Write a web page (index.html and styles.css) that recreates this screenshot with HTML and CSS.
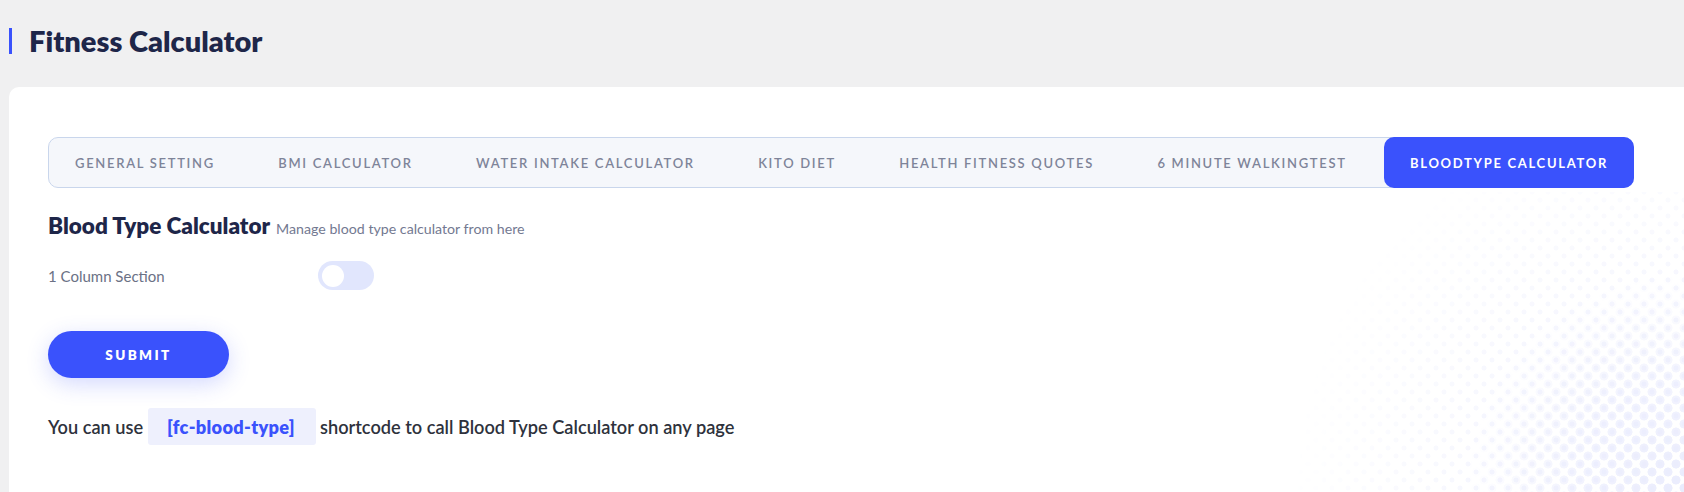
FILE: index.html
```html
<!DOCTYPE html>
<html lang="en">
<head>
<meta charset="utf-8">
<title>Fitness Calculator</title>
<link rel="stylesheet" href="styles.css">
</head>
<body>
<header class="header">
  <h1 class="page-title">Fitness Calculator</h1>
</header>
<main class="card">
  <div class="dots" aria-hidden="true"></div>
  <nav class="tabs">
    <a class="tab">General Setting</a>
    <a class="tab">BMI Calculator</a>
    <a class="tab">Water Intake Calculator</a>
    <a class="tab">Kito Diet</a>
    <a class="tab">Health Fitness Quotes</a>
    <a class="tab">6 Minute WalkingTest</a>
    <a class="tab tab-active">Bloodtype Calculator</a>
  </nav>
  <div class="section-head">
    <h2 class="section-title">Blood Type Calculator</h2>
    <span class="section-sub">Manage blood type calculator from here</span>
  </div>
  <div class="field-row">
    <span class="field-label">1 Column Section</span>
    <span class="toggle"><span class="knob"></span></span>
  </div>
  <button class="submit">SUBMIT</button>
  <p class="note">You can use <code class="shortcode">[fc-blood-type]</code> shortcode to call Blood Type Calculator on any page</p>
</main>
</body>
</html>
```
FILE: styles.css
```css
* { box-sizing: border-box; }
html, body { margin: 0; height: 100%; }
body {
  background: #f0f0f1;
  font-family: "Lato", "Noto Sans", sans-serif;
  color: #2e323c;
  display: flex;
  flex-direction: column;
}
.header {
  height: 87px;
  padding: 28px 0 0 9px;
}
.page-title {
  margin: 0;
  display: inline-block;
  border-left: 3px solid #3a52fc;
  padding-left: 17px;
  font-size: 29px;
  line-height: 26px;
  font-weight: 800;
  color: #1e2649;
}
.card {
  position: relative;
  overflow: hidden;
  flex: 1;
  margin-left: 9px;
  background: #fff;
  border-radius: 10px 0 0 0;
  padding: 50px 50px 0 39px;
}
.dots {
  position: absolute;
  right: 0;
  bottom: 0;
  width: 440px;
  height: 300px;
  pointer-events: none;
}
.dots::before,
.dots::after {
  content: "";
  position: absolute;
  inset: 0;
}
.dots::before {
  background:
    radial-gradient(circle, #eceefd 2.2px, transparent 2.8px) 0 0 / 16px 16px,
    radial-gradient(circle, #eceefd 2.2px, transparent 2.8px) 8px 8px / 16px 16px;
  -webkit-mask-image: radial-gradient(circle 440px at 100% 100%, rgba(0,0,0,0.9) 0%, rgba(0,0,0,0.5) 45%, rgba(0,0,0,0) 90%);
  mask-image: radial-gradient(circle 440px at 100% 100%, rgba(0,0,0,0.9) 0%, rgba(0,0,0,0.5) 45%, rgba(0,0,0,0) 90%);
}
.dots::after {
  background:
    radial-gradient(circle, #eaecfd 4.2px, transparent 4.8px) 0 0 / 16px 16px,
    radial-gradient(circle, #eaecfd 4.2px, transparent 4.8px) 8px 8px / 16px 16px;
  -webkit-mask-image: radial-gradient(circle 220px at 100% 100%, rgba(0,0,0,1) 0%, rgba(0,0,0,0.6) 50%, rgba(0,0,0,0) 100%);
  mask-image: radial-gradient(circle 220px at 100% 100%, rgba(0,0,0,1) 0%, rgba(0,0,0,0.6) 50%, rgba(0,0,0,0) 100%);
}
.tabs {
  position: relative;
  display: flex;
  justify-content: space-between;
  height: 51px;
  border: 1px solid #c9d6ec;
  border-radius: 10px;
  background: #f5f7fb;
}
.tab {
  display: flex;
  align-items: center;
  padding: 0 26px;
  font-size: 13px;
  font-weight: 600;
  letter-spacing: 1.7px;
  text-transform: uppercase;
  color: #7e8499;
  white-space: nowrap;
}
.tab-active {
  margin: -1px -1px -1px 0;
  background: #3a52fc;
  color: #fff;
  font-weight: 700;
  border-radius: 10px;
}
.section-head {
  position: relative;
  margin-top: 24px;
  display: flex;
  align-items: baseline;
  gap: 6px;
}
.section-title {
  margin: 0;
  font-size: 22.5px;
  line-height: 28px;
  font-weight: 800;
  color: #1e2649;
}
.section-sub {
  font-size: 14.2px;
  color: #737991;
}
.field-row {
  position: relative;
  display: flex;
  align-items: center;
  margin-top: 21px;
}
.field-label {
  width: 270px;
  font-size: 15px;
  color: #6b7185;
}
.toggle {
  position: relative;
  width: 56px;
  height: 29px;
  border-radius: 15px;
  background: #e1e6fd;
  display: flex;
  align-items: center;
  padding-left: 4px;
}
.knob {
  width: 22px;
  height: 22px;
  border-radius: 50%;
  background: #fff;
}
.submit {
  position: relative;
  display: block;
  margin-top: 41px;
  width: 181px;
  height: 47px;
  border: 0;
  border-radius: 24px;
  background: #3a52fc;
  color: #fff;
  font-family: inherit;
  font-size: 13.5px;
  font-weight: 800;
  letter-spacing: 2.4px;
  box-shadow: 0 6px 22px rgba(58, 82, 252, 0.22);
}
.note {
  position: relative;
  margin: 30px 0 0;
  display: flex;
  align-items: center;
  font-size: 18.2px;
  font-weight: 600;
  color: #2e323c;
}
.shortcode {
  margin: 0 4px 0 5px;
  height: 37px;
  display: inline-flex;
  align-items: center;
  padding: 0 21px 0 19px;
  background: #eef0fd;
  border-radius: 3px;
  font-family: inherit;
  font-size: 18.2px;
  font-weight: 800;
  letter-spacing: 0.3px;
  color: #3a52fc;
}
```
